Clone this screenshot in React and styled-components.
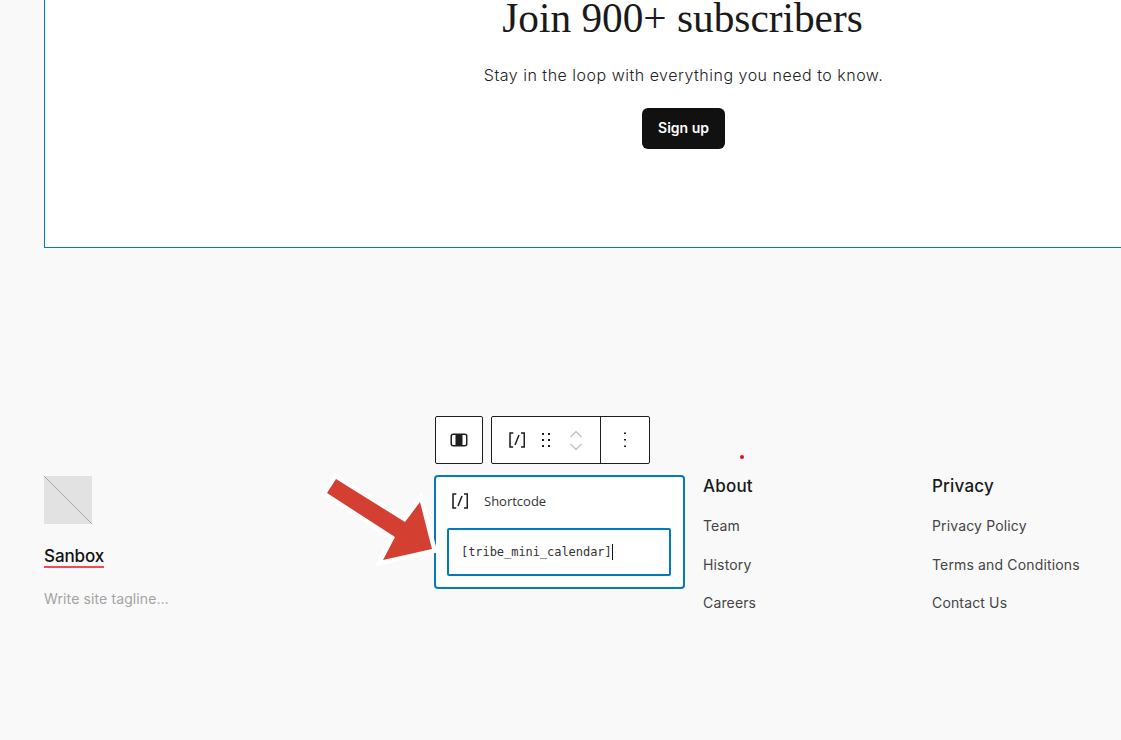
import React from "react";
import styled, { createGlobalStyle } from "styled-components";

const Global = createGlobalStyle`
  html, body { margin: 0; padding: 0; background: #f9f9f9; }
  body { font-family: Inter, "Liberation Sans", sans-serif; overflow: hidden; }
`;
const Page = styled.div`
  position: relative; width: 1121px; height: 740px; overflow: hidden; background: #f9f9f9;
`;
const Hero = styled.section`
  margin-left: 44px; height: 248px; box-sizing: border-box; background: #fff;
  border-left: 1px solid #007cba; border-bottom: 1px solid #007cba;
  display: flex; flex-direction: column; align-items: center; overflow: hidden;
  width: 1278px;
`;
const Title = styled.h2`
  margin: -8px 2px 0 0; font: 400 41.3px/52px "Liberation Serif", serif; color: #1a1a1a; white-space: nowrap;
`;
const Lead = styled.p`
  margin: 19px 0 0; font-size: 16px; line-height: 24px; font-weight: 300; color: #222; letter-spacing: 0.5px;
`;
const SignUp = styled.button`
  margin-top: 21px; width: 83px; height: 41px; border: 0; border-radius: 6px; background: #111;
  color: #fff; font: 600 14px Inter, sans-serif; padding: 0 0 2px;
`;
const Footer = styled.footer`
  margin-top: 227px; padding-left: 44px;
  display: grid; grid-template-columns: 372px 251px 211px 188px; column-gap: 18px; align-items: start;
`;
const Brand = styled.div`display: flex; flex-direction: column; align-items: flex-start; padding-top: 1px;`;
const Placeholder = styled.svg`display: block; width: 48px; height: 48px;`;
const SiteName = styled.a`
  margin-top: 23px; font-size: 17px; line-height: 19px; font-weight: 500; color: #111;
  border-bottom: 2px solid #ee4c55; letter-spacing: -0.1px;
`;
const Tagline = styled.p`margin: 22px 0 0; font-size: 14px; line-height: 17px; color: #a3a3a3; letter-spacing: 0.12px;`;
const Block = styled.div`
  box-sizing: border-box; height: 114px; width: 251px; background: #fff; border: 2px solid #007cba; border-radius: 4px;
  padding: 8px 12px 11px 11px;
`;
const BlockHead = styled.div`
  display: flex; align-items: center; gap: 12px; height: 32px; font: 400 13px "Open Sans", sans-serif; color: #333;
  padding-left: 1px;
`;
const CodeInput = styled.div`
  box-sizing: border-box; margin-top: 11px; height: 48px; border: 2px solid #007cba; border-radius: 2px;
  display: flex; align-items: center; padding-left: 12px;
  font: 12px "DejaVu Sans Mono", monospace; color: #333; letter-spacing: -0.05px;
`;
const Caret = styled.span`display: inline-block; width: 1px; height: 16px; background: #111;`;
const Column = styled.nav`display: flex; flex-direction: column; align-items: flex-start; padding-top: 1px;`;
const ColTitle = styled.h3`margin: 0 0 18px; font-size: 17px; line-height: 20px; font-weight: 500; color: #1a1a1a; letter-spacing: 0.2px;`;
const ColLink = styled.a`
  font-size: 14px; line-height: 17px; color: #444; letter-spacing: 0.15px; margin-top: ${p => p.$gap}px;
`;
const Toolbars = styled.div`
  position: absolute; left: 435px; top: 416px; display: flex; gap: 8px;
`;
const ToolGroup = styled.div`
  box-sizing: border-box; height: 48px; display: flex; background: #fff; border: 1px solid #1e1e1e; border-radius: 2px;
`;
const ToolButton = styled.div`
  box-sizing: border-box; height: 46px; width: ${p => p.$w}px; display: flex; align-items: center; justify-content: center;
  border-left: ${p => (p.$divided ? "1px solid #1e1e1e" : "0")};
`;
const MoverStack = styled.div`display: flex; flex-direction: column; width: 24px; margin-left: 6px; align-items: center; gap: 5px;`;
const DragHandle = styled.svg`width: 24px; height: 24px; margin-left: 5px; fill: #1e1e1e;`;
const Overlay = styled.svg`position: absolute; left: 320px; top: 470px; width: 125px; height: 105px;`;
const Dot = styled.i`position: absolute; left: 740px; top: 455px; width: 4px; height: 4px; border-radius: 50%; background: #e8101a;`;

const Shortcode = ({ size = 24 }) => (
  <svg width={size} height={size} viewBox="0 0 24 24" fill="#1e1e1e">
    <path d="M16 4.2v1.5h2.5v12.5H16v1.5h4V4.2h-4zM4.2 19.8h4v-1.5H5.8V5.8h2.5V4.2h-4l-.1 15.6zm5.1-3.1l1.4.6 4-10-1.4-.6-4 10z" />
  </svg>
);

const links = [
  ["About", ["Team", "History", "Careers"]],
  ["Privacy", ["Privacy Policy", "Terms and Conditions", "Contact Us"]],
];

export default function App() {
  return (
    <Page>
      <Global />
      <Hero>
        <Title>Join 900+ subscribers</Title>
        <Lead>Stay in the loop with everything you need to know.</Lead>
        <SignUp>Sign up</SignUp>
      </Hero>
      <Footer>
        <Brand>
          <Placeholder viewBox="0 0 48 48">
            <rect width="48" height="48" fill="#e2e2e2" />
            <line x1="0" y1="0" x2="48" y2="48" stroke="#a8a8a8" strokeWidth="1" />
          </Placeholder>
          <SiteName>Sanbox</SiteName>
          <Tagline>Write site tagline…</Tagline>
        </Brand>
        <Block>
          <BlockHead><Shortcode />Shortcode</BlockHead>
          <CodeInput>[tribe_mini_calendar]<Caret /></CodeInput>
        </Block>
        {links.map(([title, items]) => (
          <Column key={title}>
            <ColTitle>{title}</ColTitle>
            {items.map((t, i) => <ColLink key={t} $gap={i === 0 ? 3 : 21.5}>{t}</ColLink>)}
          </Column>
        ))}
      </Footer>
      <Toolbars>
        <ToolGroup>
          <ToolButton $w={46}>
            <svg width="20" height="14" viewBox="0 0 20 14">
              <rect x="2.25" y="1.25" width="15.5" height="11.5" rx="2" fill="#fff" stroke="#1e1e1e" strokeWidth="1.5" />
              <rect x="6.5" y="1.5" width="7" height="11" fill="#1e1e1e" />
            </svg>
          </ToolButton>
        </ToolGroup>
        <ToolGroup>
          <ToolButton $w={108}>
            <Shortcode />
            <DragHandle viewBox="0 0 24 24">
              <path d="M8 7h2V5H8v2zm0 6h2v-2H8v2zm0 6h2v-2H8v2zm6-14v2h2V5h-2zm0 8h2v-2h-2v2zm0 6h2v-2h-2v2z" />
            </DragHandle>
            <MoverStack>
              <svg width="14" height="8" viewBox="0 0 14 8" fill="none" stroke="#c4c4c4" strokeWidth="1.5"><path d="M1.5 7L7 1.5 12.5 7" /></svg>
              <svg width="14" height="8" viewBox="0 0 14 8" fill="none" stroke="#c4c4c4" strokeWidth="1.5"><path d="M1.5 1L7 6.5 12.5 1" /></svg>
            </MoverStack>
          </ToolButton>
          <ToolButton $w={49} $divided>
            <svg width="24" height="24" viewBox="0 0 24 24" fill="#1e1e1e">
              <path d="M13 19h-2v-1.5h2V19zm0-6.5h-2v-1.5h2v1.5zm0-6.5h-2V4.5h2V6z" />
            </svg>
          </ToolButton>
        </ToolGroup>
      </Toolbars>
      <Overlay viewBox="0 0 125 105">
        <path d="M16 9 L85 52 L100 32 L112 79 L63 90 L75 67 L7 23 Z" fill="#d33f30" stroke="#fff" strokeWidth="9" strokeLinejoin="miter" strokeMiterlimit="3" paintOrder="stroke" />
      </Overlay>
      <Dot />
    </Page>
  );
}
